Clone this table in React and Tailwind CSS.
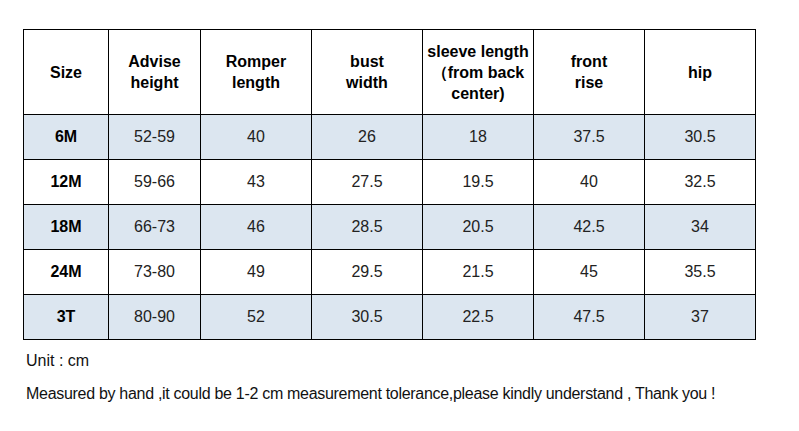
export default function App() {
  const rows = [
    ["6M", "52-59", "40", "26", "18", "37.5", "30.5"],
    ["12M", "59-66", "43", "27.5", "19.5", "40", "32.5"],
    ["18M", "66-73", "46", "28.5", "20.5", "42.5", "34"],
    ["24M", "73-80", "49", "29.5", "21.5", "45", "35.5"],
    ["3T", "80-90", "52", "30.5", "22.5", "47.5", "37"],
  ];
  const headers = [
    ["Size"],
    ["Advise", "height"],
    ["Romper", "length"],
    ["bust", "width"],
    ["sleeve length", "（from back", "center)"],
    ["front", "rise"],
    ["hip"],
  ];
  const widths = [85, 92, 111, 111, 111, 111, 111];
  return (
    <div
      className="w-[799px] h-[431px] bg-white text-[#1a1a1a] overflow-hidden"
      style={{ fontFamily: '"Liberation Sans", Arial, sans-serif' }}
    >
      <div className="pt-[29px] pl-[23px]">
        <table className="border-collapse table-fixed w-[733px]">
          <colgroup>
            {widths.map((w, i) => (
              <col key={i} style={{ width: w }} />
            ))}
          </colgroup>
          <thead>
            <tr className="h-[85px]">
              {headers.map((h, i) => (
                <th
                  key={i}
                  className="border border-black font-bold text-[16px] leading-[21px] text-center align-middle p-0 text-black"
                >
                  {h.map((l, j) => (
                    <div key={j} className="whitespace-nowrap">{l}</div>
                  ))}
                </th>
              ))}
            </tr>
          </thead>
          <tbody>
            {rows.map((r, ri) => (
              <tr
                key={ri}
                className={`h-[45px] ${ri % 2 === 0 ? "bg-[#dce6f0]" : "bg-white"}`}
              >
                {r.map((c, ci) => (
                  <td
                    key={ci}
                    className={`border border-black text-center align-middle p-0 text-[16px] ${
                      ci === 0 ? "font-bold text-black" : "text-[#222]"
                    }`}
                  >
                    {c}
                  </td>
                ))}
              </tr>
            ))}
          </tbody>
        </table>
      </div>
      <div className="pl-[26px] pt-[11px] text-[16px] leading-[20px] text-[#111]">Unit : cm</div>
      <div className="pl-[26px] pt-[13px] text-[16px] leading-[20px] text-[#111] whitespace-nowrap tracking-[-0.3px]">
        Measured by hand ,it could be 1-2 cm measurement tolerance,please kindly understand , Thank you !
      </div>
    </div>
  );
}
